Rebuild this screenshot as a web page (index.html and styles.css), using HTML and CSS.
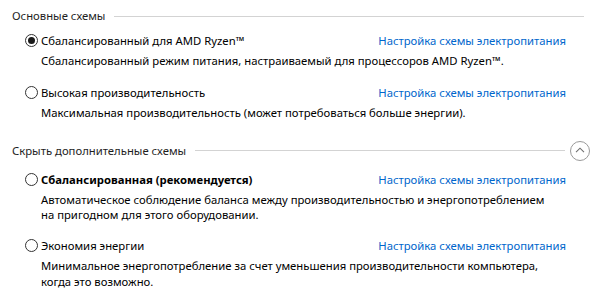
FILE: index.html
```html
<!DOCTYPE html>
<html lang="ru">
<head>
    <meta charset="UTF-8">
    <meta name="viewport" content="width=device-width, initial-scale=1.0">
    <title>Электропитание</title>
    <link rel="stylesheet" href="styles.css">
</head>
<body>
    <div class="page">
        <!-- Основные схемы -->
        <div class="group">
            <div class="group-header">
                <span class="group-title">Основные схемы</span>
                <span class="rule rule-full"></span>
            </div>
            <div class="schemes">
                <div class="scheme">
                    <div class="scheme-head">
                        <label class="scheme-name">
                            <input type="radio" name="plan" checked>
                            <span>Сбалансированный для AMD Ryzen™</span>
                        </label>
                        <a class="scheme-link" href="#">Настройка схемы электропитания</a>
                    </div>
                    <p class="scheme-desc">Сбалансированный режим питания, настраиваемый для процессоров AMD Ryzen™.</p>
                </div>
                <div class="scheme">
                    <div class="scheme-head">
                        <label class="scheme-name">
                            <input type="radio" name="plan">
                            <span>Высокая производительность</span>
                        </label>
                        <a class="scheme-link" href="#">Настройка схемы электропитания</a>
                    </div>
                    <p class="scheme-desc">Максимальная производительность (может потребоваться больше энергии).</p>
                </div>
            </div>
        </div>

        <!-- Дополнительные схемы -->
        <div class="group">
            <div class="group-header">
                <span class="group-title">Скрыть дополнительные схемы</span>
                <span class="rule"></span>
                <button class="collapse-btn" title="Скрыть">
                    <svg width="10" height="6" viewBox="0 0 10 6">
                        <path d="M1 5.2 L5 1.2 L9 5.2" fill="none" stroke="#6e6e6e" stroke-width="1.1"/>
                    </svg>
                </button>
            </div>
            <div class="schemes schemes-extra">
                <div class="scheme">
                    <div class="scheme-head">
                        <label class="scheme-name">
                            <input type="radio" name="plan">
                            <span class="bold">Сбалансированная (рекомендуется)</span>
                        </label>
                        <a class="scheme-link" href="#">Настройка схемы электропитания</a>
                    </div>
                    <p class="scheme-desc">Автоматическое соблюдение баланса между производительностью и энергопотреблением<br>на пригодном для этого оборудовании.</p>
                </div>
                <div class="scheme">
                    <div class="scheme-head">
                        <label class="scheme-name">
                            <input type="radio" name="plan">
                            <span>Экономия энергии</span>
                        </label>
                        <a class="scheme-link" href="#">Настройка схемы электропитания</a>
                    </div>
                    <p class="scheme-desc">Минимальное энергопотребление за счет уменьшения производительности компьютера,<br>когда это возможно.</p>
                </div>
            </div>
        </div>
    </div>
</body>
</html>
```

FILE: styles.css
```css
* {
    margin: 0;
    padding: 0;
    box-sizing: border-box;
}

body {
    font-family: 'Noto Sans', 'Liberation Sans', Arial, sans-serif;
    font-size: 11.3px;
    background-color: #fff;
    color: #000;
}

.page {
    padding: 8px 8px 0 12px;
}

.group + .group {
    margin-top: 20px;
}

.group-header {
    display: flex;
    align-items: center;
    gap: 9px;
    min-height: 16px;
    line-height: 16px;
    color: #1e1e1e;
}

.rule {
    flex: 1;
    border-top: 1px solid #d3d3d3;
}

.rule-full {
    margin-right: 6px;
}

.collapse-btn {
    width: 20px;
    height: 20px;
    margin-left: -4px;
    border: 1px solid #9a9a9a;
    border-radius: 50%;
    background: #fff;
    display: flex;
    align-items: center;
    justify-content: center;
    cursor: pointer;
}

.collapse-btn svg {
    margin-top: -2px;
}

.schemes {
    margin-top: 9px;
    padding-left: 13px;
}

.schemes .scheme + .scheme {
    margin-top: 16px;
}

.schemes-extra {
    margin-top: 11px;
}

.schemes-extra .scheme + .scheme {
    margin-top: 15px;
}

.scheme-head {
    display: flex;
    justify-content: space-between;
    align-items: center;
    padding-right: 24px;
    line-height: 15.4px;
}

.scheme-name {
    display: flex;
    align-items: center;
    gap: 3px;
    cursor: pointer;
}

.scheme-name input {
    appearance: none;
    -webkit-appearance: none;
    width: 13px;
    height: 13px;
    border: 1px solid #333;
    border-radius: 50%;
    background: #fff;
    display: flex;
    align-items: center;
    justify-content: center;
}

.scheme-name input:checked::after {
    content: '';
    width: 7px;
    height: 7px;
    border-radius: 50%;
    background: #1a1a1a;
}

.bold {
    font-weight: bold;
}

.scheme-link {
    color: #0066cc;
    text-decoration: none;
}

.scheme-link:hover {
    text-decoration: underline;
}

.scheme-desc {
    margin: 5px 0 0 16px;
    line-height: 15.4px;
}
```
